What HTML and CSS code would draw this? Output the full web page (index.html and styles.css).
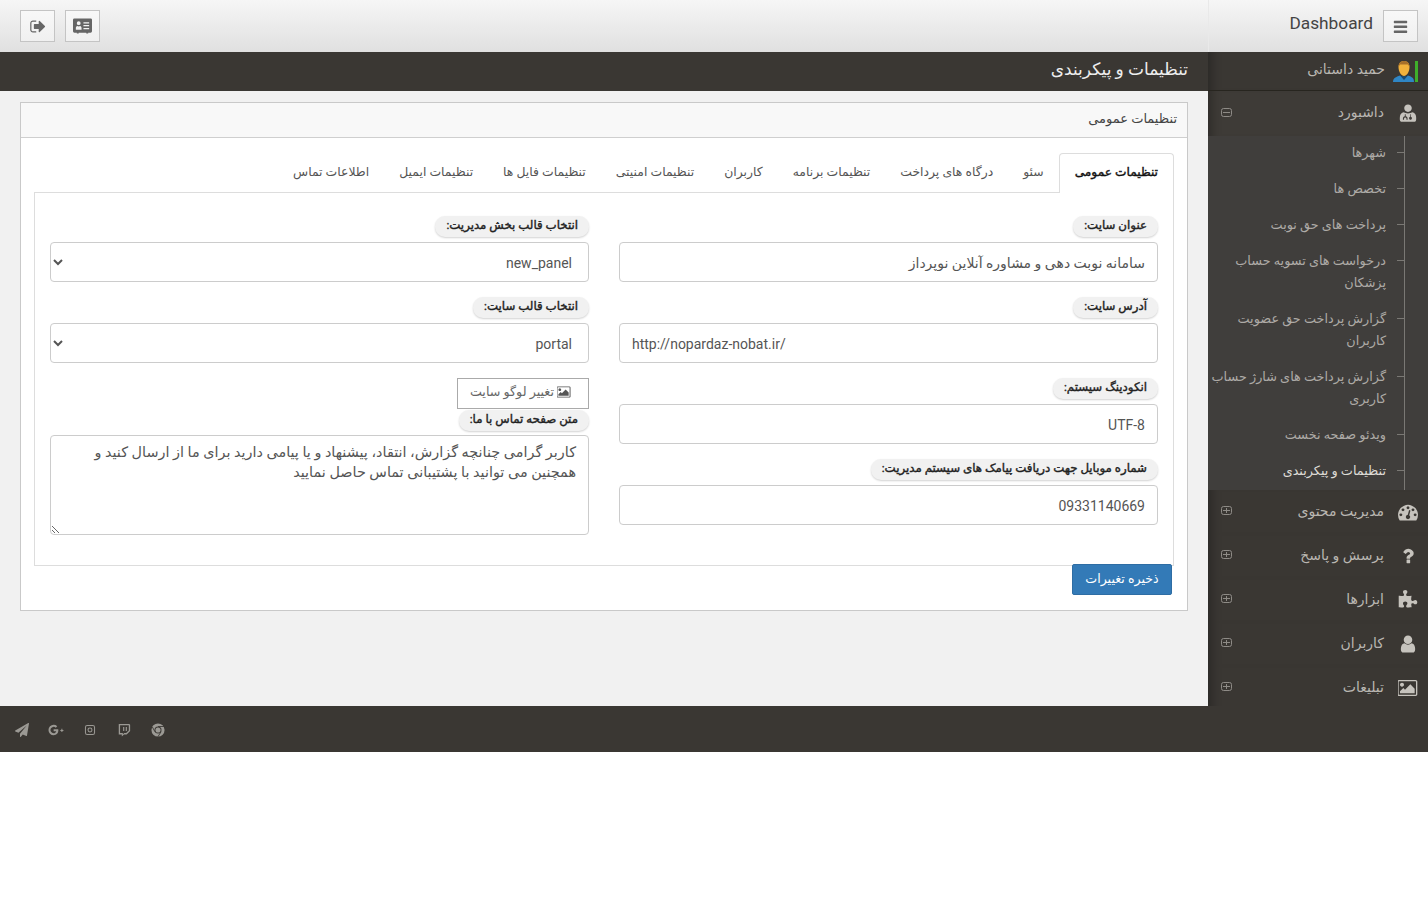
FILE: index.html
```html
<!DOCTYPE html>
<html lang="fa" dir="rtl">
<head>
  <meta charset="UTF-8" />
  <title>تنظیمات و پیکربندی</title>
  <link rel="stylesheet" href="styles.css">
</head>
<body>

  <div class="shell">

    <!-- Sidebar -->
    <aside class="sidebar">
      <div class="brand">
        <button class="tool-btn" type="button">
          <svg class="tool-icon" viewBox="0 0 1536 1792"><path d="M1472 1376v128q0 26-19 45t-45 19h-1280q-26 0-45-19t-19-45v-128q0-26 19-45t45-19h1280q26 0 45 19t19 45zm0-512v128q0 26-19 45t-45 19h-1280q-26 0-45-19t-19-45v-128q0-26 19-45t45-19h1280q26 0 45 19t19 45zm0-512v128q0 26-19 45t-45 19h-1280q-26 0-45-19t-19-45v-128q0-26 19-45t45-19h1280q26 0 45 19t19 45z"/></svg>
        </button>
        <span class="brand-name">Dashboard</span>
      </div>

      <div class="user-row">
        <svg class="avatar" viewBox="0 0 25 21">
          <rect x="22" y="0" width="3" height="21" fill="#3fae2a"/>
          <path d="M0 21c0-4 3-5 7-6.500l4 2.500 4-2.500c4 1.500 6 2.500 6 6.500z" fill="#2f86c5"/>
          <path d="M7.500 15h7l-3.500 4z" fill="#1c4a6e"/>
          <path d="M5.500 6c0-4 2.500-6 5.500-6s5.500 2 5.500 6c0 5-3 9-5.500 9s-5.500-4-5.500-9z" fill="#f2b23c"/>
          <path d="M5.500 6c0-4 2.500-6 5.500-6s5.500 2 5.500 6l-1.500-2.500h-8z" fill="#a8702a"/>
        </svg>
        <span class="menu-label">حمید داستانی</span>
      </div>

      <nav class="menu">
        <div class="menu-item menu-open">
          <svg class="menu-icon" viewBox="0 0 1792 1792"><path d="M896 128c190 0 340 150 340 330s-150 340-340 340-340-160-340-340 150-330 340-330zM520 830c110 70 230 100 376 100s266-30 376-100c210 40 330 170 350 400 15 190 12 330-40 400-40 40-100 40-150 40h-1072c-50 0-110 0-150-40-52-70-55-210-40-400 20-230 140-360 350-400zM610 1000v190c-100 20-170 110-170 210v110h100v-100c0-60 50-120 110-120s110 60 110 120v100h100v-110c0-100-70-190-170-210v-190zm480 10v230c-60 20-100 70-100 130 0 80 60 140 130 140s130-60 130-140c0-60-40-110-100-130v-230z" fill-rule="evenodd"/></svg>
          <span class="menu-label">داشبورد</span>
          <svg class="toggle" viewBox="0 0 11 9"><rect x=".5" y=".5" width="10" height="8" rx="2"/><path d="M2 4.500h7"/></svg>
        </div>

        <ul class="submenu">
          <li>شهرها</li>
          <li>تخصص ها</li>
          <li>پرداخت های حق نوبت</li>
          <li>درخواست های تسویه حساب پزشکان</li>
          <li>گزارش پرداخت حق عضویت کاربران</li>
          <li>گزارش پرداخت های شارژ حساب کاربری</li>
          <li>ویدئو صفحه نخست</li>
          <li class="current">تنظیمات و پیکربندی</li>
        </ul>

        <div class="menu-item">
          <svg class="menu-icon" viewBox="0 0 1792 1792"><path d="M384 1152q0-53-37.500-90.500t-90.500-37.500-90.500 37.500-37.500 90.500 37.500 90.500 90.500 37.500 90.500-37.500 37.500-90.500zm192-448q0-53-37.500-90.500t-90.500-37.500-90.500 37.500-37.500 90.500 37.500 90.500 90.500 37.500 90.500-37.500 37.500-90.500zm428 481l101-382q6-26-7.500-48.500t-38.500-29.500-48 6.500-30 39.500l-101 382q-60 5-107 43.500t-63 98.500q-20 77 20 146t117 89 146-20 89-117q16-60-6-117t-72-91zm660-33q0-53-37.500-90.500t-90.500-37.500-90.500 37.500-37.500 90.500 37.500 90.500 90.500 37.500 90.500-37.500 37.500-90.500zm-640-640q0-53-37.500-90.500t-90.500-37.500-90.500 37.500-37.500 90.500 37.500 90.500 90.500 37.500 90.500-37.500 37.500-90.500zm448 192q0-53-37.500-90.500t-90.500-37.500-90.500 37.500-37.500 90.500 37.500 90.500 90.500 37.500 90.500-37.500 37.500-90.500zm320 448q0 261-141 483-19 29-54 29h-1402q-35 0-54-29-141-221-141-483 0-182 71-348t191-286 286-191 348-71 348 71 286 191 191 286 71 348z"/></svg>
          <span class="menu-label">مدیریت محتوی</span>
          <svg class="toggle" viewBox="0 0 11 9"><rect x=".5" y=".5" width="10" height="8" rx="2"/><path d="M2 4.500h7M5.500 2v5"/></svg>
        </div>
        <div class="menu-item">
          <svg class="menu-icon" viewBox="0 0 1792 1792"><path d="M1088 1256v240q0 16-12 28t-28 12h-240q-16 0-28-12t-12-28v-240q0-16 12-28t28-12h240q16 0 28 12t12 28zm316-600q0 54-15.500 101t-35 76.500-55 59.500-57.500 43.500-61 35.500q-41 23-68.500 65t-27.500 67q0 17-12 32.500t-28 15.500h-240q-15 0-25.500-18.500t-10.500-37.500v-45q0-83 65-156.500t143-108.500q59-27 84-56t25-76q0-42-46.500-74t-107.500-32q-65 0-108 29-35 25-107 115-13 16-31 16-12 0-25-8l-164-125q-13-10-15.500-25t5.500-28q160-266 464-266 80 0 161 31t146 83 106 127.500 41 158.500z"/></svg>
          <span class="menu-label">پرسش و پاسخ</span>
          <svg class="toggle" viewBox="0 0 11 9"><rect x=".5" y=".5" width="10" height="8" rx="2"/><path d="M2 4.500h7M5.500 2v5"/></svg>
        </div>
        <div class="menu-item">
          <svg class="menu-icon" viewBox="0 0 1792 1792"><path d="M1728 1098q0 81-44.500 135t-123.500 54q-41 0-77.500-17.500t-59-38-56.500-38-71-17.500q-110 0-110 124 0 39 16 115t15 115v5q-22 0-33 1-34 3-97.500 11.500t-115.500 13.500-98 5q-61 0-103-26.500t-42-83.500q0-37 17.500-71t38-56.500 38-59 17.500-77.500q0-79-54-123.500t-135-44.500q-84 0-143 45.500t-59 127.500q0 43 15 83t33.500 64.500 33.500 53 15 50.500q0 45-46 89-37 35-117 35-95 0-245-24-9-2-27.500-4t-27.500-4l-13-2q-1 0-3-1-2 0-2-1v-1024q2 1 17.500 3.500t34 5 21.500 3.500q150 24 245 24 80 0 117-35 46-44 46-89 0-22-15-50.500t-33.500-53-33.500-64.500-15-83q0-82 59-127.500t144-45.500q80 0 134 44.500t54 123.500q0 41-17.500 77.500t-38 59-38 56.500-17.500 71q0 57 42 83.500t103 26.500q64 0 180-15t163-17v2q-1 2-3.500 17.500t-5 34-3.500 21.500q-24 150-24 245 0 80 35 117 44 46 89 46 22 0 50.500-15t53-33.500 64.500-33.500 83-15q82 0 127.500 59t45.500 143z"/></svg>
          <span class="menu-label">ابزارها</span>
          <svg class="toggle" viewBox="0 0 11 9"><rect x=".5" y=".5" width="10" height="8" rx="2"/><path d="M2 4.500h7M5.500 2v5"/></svg>
        </div>
        <div class="menu-item">
          <svg class="menu-icon" viewBox="0 0 1792 1792"><path d="M1536 1399q0 109-62.500 187t-150.500 78h-854q-88 0-150.500-78t-62.500-187q0-85 8.500-160.500t31.500-152 58.500-131 94-89 134.500-34.500q131 128 313 128t313-128q76 0 134.500 34.500t94 89 58.500 131 31.500 152 8.500 160.500zm-256-887q0 159-112.500 271.500t-271.500 112.500-271.500-112.500-112.500-271.500 112.500-271.500 271.500-112.500 271.500 112.500 112.500 271.500z"/></svg>
          <span class="menu-label">کاربران</span>
          <svg class="toggle" viewBox="0 0 11 9"><rect x=".5" y=".5" width="10" height="8" rx="2"/><path d="M2 4.500h7M5.500 2v5"/></svg>
        </div>
        <div class="menu-item">
          <svg class="menu-icon menu-icon-pic" viewBox="0 120 1920 1552"><path d="M576 576q0 80-56 136t-136 56-136-56-56-136 56-136 136-56 136 56 56 136zm1024 384v448h-1408v-192l320-320 160 160 512-512zm96-704h-1600q-13 0-22.500 9.500t-9.500 22.500v1216q0 13 9.500 22.500t22.500 9.500h1600q13 0 22.500-9.500t9.500-22.500v-1216q0-13-9.500-22.500t-22.500-9.500zm160 32v1216q0 66-47 113t-113 47h-1600q-66 0-113-47t-47-113v-1216q0-66 47-113t113-47h1600q66 0 113 47t47 113z"/></svg>
          <span class="menu-label">تبلیغات</span>
          <svg class="toggle" viewBox="0 0 11 9"><rect x=".5" y=".5" width="10" height="8" rx="2"/><path d="M2 4.500h7M5.500 2v5"/></svg>
        </div>
      </nav>
    </aside>

    <!-- Main -->
    <div class="main">
      <header class="topbar">
        <button class="tool-btn" type="button">
          <svg class="tool-icon wide" viewBox="0 0 20 16"><path fill-rule="evenodd" d="M1.500 0h17A1.500 1.500 0 0 1 20 1.500v12a1.500 1.500 0 0 1-1.500 1.500H16v1h-2v-1H6v1H4v-1H1.500A1.500 1.500 0 0 1 0 13.500v-12A1.500 1.500 0 0 1 1.500 0zM6 3a2 2 0 1 0 0 4 2 2 0 0 0 0-4zM3 12h6v-2c0-1-.7-1.700-1.500-2L6 8.500 4.500 8C3.700 8.300 3 9 3 10zM11 4v1.300h6V4zm0 3v1.300h6V7zm0 3v1.300h6V10z"/></svg>
        </button>
        <button class="tool-btn" type="button">
          <svg class="tool-icon" viewBox="0 0 1664 1792"><path d="M704 1440q0 4 1 20t.5 26.500-3 23.500-10 19.500-20.500 6.500h-320q-119 0-203.500-84.500t-84.500-203.500v-704q0-119 84.500-203.500t203.500-84.500h320q13 0 22.500 9.500t9.500 22.500q0 4 1 20t.5 26.500-3 23.500-10 19.500-20.500 6.500h-320q-66 0-113 47t-47 113v704q0 66 47 113t113 47h312l11.500 1 11.500 3 8 5.500 7 9 2 13.500zm928-544q0 26-19 45l-544 544q-19 19-45 19t-45-19-19-45v-288h-448q-26 0-45-19t-19-45v-384q0-26 19-45t45-19h448v-288q0-26 19-45t45-19 45 19l544 544q19 19 19 45z"/></svg>
        </button>
      </header>

      <div class="page-title">تنظیمات و پیکربندی</div>

      <main class="content">
        <section class="panel">
          <div class="panel-heading">تنظیمات عمومی</div>
          <div class="panel-body">
            <ul class="tabs">
              <li class="active">تنظیمات عمومی</li>
              <li>سئو</li>
              <li>درگاه های پرداخت</li>
              <li>تنظیمات برنامه</li>
              <li>کاربران</li>
              <li>تنظیمات امنیتی</li>
              <li>تنظیمات فایل ها</li>
              <li>تنظیمات ایمیل</li>
              <li>اطلاعات تماس</li>
            </ul>

            <form class="tab-pane">
              <div class="form-col">
                <div class="field">
                  <label class="pill">عنوان سایت:</label>
                  <input class="control" type="text" value="سامانه نوبت دهی و مشاوره آنلاین نوپرداز" />
                </div>
                <div class="field">
                  <label class="pill">آدرس سایت:</label>
                  <input class="control" type="text" dir="ltr" value="http://nopardaz-nobat.ir/" />
                </div>
                <div class="field">
                  <label class="pill">انکودینگ سیستم:</label>
                  <input class="control" type="text" value="UTF-8" />
                </div>
                <div class="field">
                  <label class="pill">شماره موبایل جهت دریافت پیامک های سیستم مدیریت:</label>
                  <input class="control" type="text" value="09331140669" />
                </div>
              </div>

              <div class="form-col">
                <div class="field">
                  <label class="pill">انتخاب قالب بخش مدیریت:</label>
                  <select class="control"><option>new_panel</option></select>
                </div>
                <div class="field">
                  <label class="pill">انتخاب قالب سایت:</label>
                  <select class="control"><option>portal</option></select>
                </div>
                <button class="logo-btn" type="button">
                  <svg viewBox="0 120 1920 1552"><path d="M576 576q0 80-56 136t-136 56-136-56-56-136 56-136 136-56 136 56 56 136zm1024 384v448h-1408v-192l320-320 160 160 512-512zm96-704h-1600q-13 0-22.500 9.500t-9.500 22.500v1216q0 13 9.500 22.500t22.500 9.500h1600q13 0 22.500-9.500t9.500-22.500v-1216q0-13-9.500-22.500t-22.500-9.500zm160 32v1216q0 66-47 113t-113 47h-1600q-66 0-113-47t-47-113v-1216q0-66 47-113t113-47h1600q66 0 113 47t47 113z"/></svg>
                  <span>تغییر لوگو سایت</span>
                </button>
                <div class="field field-text">
                  <label class="pill">متن صفحه تماس با ما:</label>
                  <textarea class="control">کاربر گرامی چنانچه گزارش، انتقاد، پیشنهاد و یا پیامی دارید برای ما از ارسال کنید و همچنین می توانید با پشتیبانی تماس حاصل نمایید</textarea>
                </div>
              </div>
            </form>

            <button class="save-btn" type="button">ذخیره تغییرات</button>
          </div>
        </section>
      </main>
    </div>
  </div>

  <!-- Footer -->
  <footer class="footer">
    <svg class="social" viewBox="0 0 16 16"><circle cx="8" cy="8" r="7.500"/><circle cx="8" cy="8" r="4" class="social-cut"/><circle cx="8" cy="8" r="2.900"/><path d="M8 4h7M4.500 10L1.500 4.500M11.500 10L8 15.500" class="social-line"/></svg>
    <svg class="social" viewBox="0 0 16 16"><path fill-rule="evenodd" d="M2 1h12l1 1v7l-4 4H8l-2.500 2.500V13H2zM3.500 2.500v9h3.200v1.500l1.500-1.500h2.300L13.500 8.500v-6zM7 4.500h1.300V9H7zm3 0h1.300V9H10z"/></svg>
    <svg class="social" viewBox="-1 -1 18 18"><path fill-rule="evenodd" d="M4.500 1.500h7a3 3 0 0 1 3 3v7a3 3 0 0 1-3 3h-7a3 3 0 0 1-3-3v-7a3 3 0 0 1 3-3zm0 1.300A1.700 1.700 0 0 0 2.800 4.500v7a1.700 1.700 0 0 0 1.700 1.700h7a1.700 1.700 0 0 0 1.700-1.700v-7a1.700 1.700 0 0 0-1.700-1.700zM8 4.800a3.200 3.200 0 1 1 0 6.400 3.200 3.200 0 0 1 0-6.400zm0 1.300a1.900 1.900 0 1 0 0 3.800 1.900 1.900 0 0 0 0-3.800z"/></svg>
    <svg class="social social-wide" viewBox="0 0 17 12"><path d="M10.800 5.200H6v2h2.700c-.3 1.300-1.300 2.200-2.700 2.200a3.400 3.400 0 1 1 2.300-5.900l1.500-1.500A5.500 5.500 0 0 0 6 .5a5.500 5.500 0 1 0 0 11c3.200 0 5-2.300 5-5.200 0-.4 0-.8-.2-1.100zM15.300 4.800h-1.100v1.100h-1.100V7h1.100v1.100h1.100V7h1.100V5.900h-1.100z"/></svg>
    <svg class="social" viewBox="0 0 1792 1792"><path d="M1764 11q33 24 27 64l-256 1536q-5 29-32 45-14 8-31 8-11 0-24-5l-453-185-242 295q-18 23-49 23-13 0-22-4-19-7-30.500-23.500t-11.500-36.500v-349l864-1059-1069 925-395-162q-37-14-40-55-2-40 32-59l1664-960q15-9 32-9 20 0 36 11z"/></svg>
  </footer>

</body>
</html>
```

FILE: styles.css
```css
* {
  box-sizing: border-box;
}

body {
  margin: 0;
  background: #fff;
  font-family: Roboto, "DejaVu Sans", sans-serif;
  font-size: 13px;
  color: #333;
}

.shell {
  display: flex;
  height: 706px;
  overflow: hidden;
}

/* Sidebar */
.sidebar {
  width: 220px;
  flex-shrink: 0;
  background: #3a3733;
}

.brand {
  height: 52px;
  display: flex;
  align-items: flex-start;
  gap: 10px;
  padding: 10px 10px 0 0;
  background: linear-gradient(to bottom, #f6f6f6, #e0e0e0);
  box-shadow: inset 1px 0 #e9e9e9;
}

.brand-name {
  font-size: 17.300px;
  line-height: 27px;
  color: #444;
}

.tool-btn {
  width: 35px;
  height: 32px;
  padding: 0;
  display: flex;
  align-items: center;
  justify-content: center;
  background: linear-gradient(to bottom, #f8f8f8, #f0f0f0);
  border: 1px solid #c4c4c4;
}

.tool-icon {
  width: 17px;
  height: 17px;
  fill: #666;
}

.tool-icon.wide {
  width: 19px;
  height: 16px;
}

.user-row {
  height: 39px;
  display: flex;
  align-items: center;
  gap: 8px;
  padding-right: 10px;
  color: #b9b6b1;
  border-bottom: 1px solid #27251f;
  box-shadow: inset 12px 0 10px -8px rgba(0, 0, 0, 0.25);
}

.avatar {
  width: 25px;
  height: 21px;
  flex-shrink: 0;
}

.menu-item {
  height: 44px;
  display: flex;
  align-items: center;
  padding: 0 8px 0 13px;
  color: #b9b6b1;
  box-shadow: inset 12px 0 10px -8px rgba(0, 0, 0, 0.25);
}

.menu-open {
  height: 45px;
  background: #3e3b37;
}

.menu-icon {
  width: 24px;
  height: 20px;
  flex-shrink: 0;
  fill: #c6c3bd;
  margin-left: 12px;
  margin-bottom: 1px;
}

.menu-icon-pic {
  padding: 1px 2px;
}

.menu-label {
  font-size: 14px;
  margin-bottom: 3px;
}

.user-row .menu-label {
  margin-bottom: 5px;
}

.toggle {
  width: 11px;
  height: 9px;
  margin-right: auto;
  margin-bottom: 3px;
  fill: none;
  stroke: #8e8b86;
}

.submenu {
  list-style: none;
  margin: 0;
  padding: 0 42px 0 0;
  background: #403e3c;
  position: relative;
}

.submenu::before {
  content: "";
  position: absolute;
  top: 0;
  bottom: 0;
  right: 23px;
  width: 1px;
  background: #7a7874;
}

.submenu li {
  position: relative;
  padding: 6px 0 8px;
  line-height: 22px;
  font-size: 12.800px;
  color: #aeaba7;
}

.submenu li::before {
  content: "";
  position: absolute;
  top: 16px;
  right: -18px;
  width: 7px;
  height: 1px;
  background: #7a7874;
}

.submenu li.current {
  color: #dedbd6;
}

/* Main */
.main {
  flex: 1;
  min-width: 0;
  display: flex;
  flex-direction: column;
}

.topbar {
  height: 52px;
  display: flex;
  justify-content: flex-end;
  align-items: flex-start;
  gap: 10px;
  padding: 10px 0 0 20px;
  background: linear-gradient(to bottom, #f6f6f6, #e0e0e0);
}

.page-title {
  height: 39px;
  padding: 0 20px;
  line-height: 35px;
  font-size: 17px;
  color: #eee;
  background: #3a3733;
}

.content {
  flex: 1;
  padding: 11px 20px 0;
  background: #f1f1f1;
}

.panel {
  height: 509px;
  background: #fff;
  border: 1px solid #c9c9c9;
}

.panel-heading {
  height: 35px;
  padding: 0 10px;
  line-height: 32px;
  font-size: 13px;
  color: #444;
  background: #f8f8f8;
  border-bottom: 1px solid #cfcfcf;
}

.panel-body {
  padding: 15px 13px 0;
}

.tabs {
  list-style: none;
  display: flex;
  margin: 0;
  padding: 0;
  height: 39px;
  position: relative;
  z-index: 1;
}

.tabs li {
  height: 39px;
  padding: 0 15px;
  line-height: 37px;
  font-size: 12.400px;
  color: #555;
}

.tabs li.active {
  height: 40px;
  font-size: 12.200px;
  color: #111;
  -webkit-text-stroke: 0.4px #111;
  background: #fff;
  border: 1px solid #ddd;
  border-bottom: 0;
  border-radius: 4px 4px 0 0;
}

.tab-pane {
  height: 374px;
  display: grid;
  grid-template-columns: 1fr 1fr;
  column-gap: 30px;
  padding: 23px 15px 0;
  border: 1px solid #ddd;
}

.form-col {
  display: flex;
  flex-direction: column;
}

.field {
  display: flex;
  flex-direction: column;
  align-items: flex-start;
  margin-bottom: 15px;
}

.pill {
  height: 21px;
  padding: 0 11px;
  line-height: 19px;
  margin-bottom: 5px;
  font-size: 11.800px;
  color: #222;
  -webkit-text-stroke: 0.4px #222;
  background: #f1f1f1;
  border-radius: 10px;
  box-shadow: 0 1px 2px rgba(0, 0, 0, 0.18);
}

.control {
  width: 100%;
  height: 40px;
  padding: 2px 12px 0;
  font-family: inherit;
  font-size: 14px;
  color: #555;
  background: #fff;
  border: 1px solid #ccc;
  border-radius: 4px;
}

select.control {
  padding: 2px 12px 0 0;
}

textarea.control {
  display: block;
  height: 100px;
  padding: 7px 12px;
  font-size: 14.400px;
  line-height: 20px;
}

.logo-btn {
  align-self: flex-start;
  width: 132px;
  height: 31px;
  display: flex;
  align-items: center;
  gap: 3px;
  padding: 0 17px 4px 0;
  font-family: inherit;
  font-size: 12.700px;
  color: #666;
  background: #fff;
  border: 1px solid #aaa;
}

.logo-btn svg {
  width: 14px;
  height: 12px;
  fill: #555;
}

.field-text .pill {
  margin-top: 1px;
  margin-bottom: 4px;
}

.save-btn {
  display: block;
  width: 100px;
  height: 31px;
  margin: -2px 2px 0 0;
  padding: 0 0 2px;
  font-family: inherit;
  font-size: 12.600px;
  color: #fff;
  background: #337ab7;
  border: 1px solid #2e6da4;
  border-radius: 2px;
  position: relative;
}

/* Footer */
.footer {
  height: 46px;
  display: flex;
  justify-content: flex-end;
  align-items: center;
  gap: 20px;
  padding: 2px 0 0 15px;
  background: #3a3733;
}

.social {
  width: 14px;
  height: 14px;
  fill: #9b9994;
}

.social-wide {
  width: 16px;
  margin: 0 -1px;
}

.social-cut {
  fill: #3a3733;
}

.social-line {
  fill: none;
  stroke: #3a3733;
  stroke-width: 1;
}
```
